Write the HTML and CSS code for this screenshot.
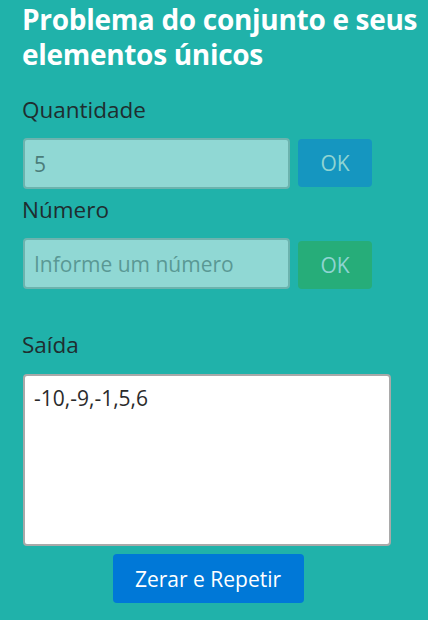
FILE: index.html
```html
<!DOCTYPE html>
<html lang="pt-BR">
<head>
<meta charset="utf-8">
<title>Conjunto</title>
<link rel="stylesheet" href="styles.css">
</head>
<body>
<main class="page">
  <h1 class="title">Problema do conjunto e seus elementos únicos</h1>
  <label class="label label-first" for="qtd">Quantidade</label>
  <div class="row row-one">
    <input class="field" id="qtd" type="text" value="5" disabled>
    <button class="btn btn-ok btn-blue" disabled>OK</button>
  </div>
  <label class="label label-num" for="num">Número</label>
  <div class="row row-two">
    <input class="field" id="num" type="text" placeholder="Informe um número" disabled>
    <button class="btn btn-ok btn-green" disabled>OK</button>
  </div>
  <label class="label label-out" for="out">Saída</label>
  <textarea class="output" id="out" readonly>-10,-9,-1,5,6</textarea>
  <div class="actions">
    <button class="btn btn-reset">Zerar e Repetir</button>
  </div>
</main>
</body>
</html>
```
FILE: styles.css
```css
html, body {
  margin: 0;
  padding: 0;
  background: #20b2aa;
}
body {
  font-family: "Open Sans", "Noto Sans", sans-serif;
  color: #212529;
  overflow: hidden;
}
.page {
  padding: 2px 2px 0 22px;
}
.title {
  margin: 0;
  font-size: 28px;
  line-height: 35px;
  font-weight: 700;
  color: #ffffff;
  letter-spacing: -0.3px;
}
.label {
  display: block;
  font-size: 22.5px;
  line-height: 27px;
  color: #1f2d2f;
}
.label-first { margin-top: 24px; }
.label-num { margin-top: 7px; }
.label-out { margin-top: 42px; }
.row {
  display: flex;
  gap: 8px;
  margin-top: 15px;
  width: 351px;
}
.row-one { align-items: flex-start; }
.row-one .btn-ok { margin-top: 1px; height: 48px; }
.row-two { align-items: flex-end; }
.field {
  box-sizing: border-box;
  width: 267px;
  height: 51px;
  margin: 0 0 0 1px;
  padding: 0 9px;
  border: 2px solid #6cb3ae;
  border-radius: 4px;
  background: #90d8d4;
  font-family: inherit;
  font-size: 21px;
  color: #4b7d7a;
}
.field::placeholder {
  color: #5a9894;
  opacity: 1;
}
.btn {
  border: none;
  border-radius: 4px;
  font-family: inherit;
  cursor: pointer;
}
.btn-ok {
  width: 74px;
  height: 48px;
  font-size: 21px;
  color: #8fd4d2;
}
.btn-blue { background: #1596c0; }
.btn-green { background: #26ad79; }
.output {
  box-sizing: border-box;
  display: block;
  width: 368px;
  height: 172px;
  margin: 16px 0 0 1px;
  padding: 9px 9px;
  border: 2px solid #a9a9a9;
  border-radius: 4px;
  background: #ffffff;
  font-family: inherit;
  font-size: 21px;
  line-height: 26px;
  color: #2b2b2b;
  resize: none;
}
.actions {
  width: 368px;
  display: flex;
  justify-content: center;
  margin-top: 8px;
}
.btn-reset {
  width: 191px;
  height: 49px;
  margin-left: 4px;
  background: #0078d7;
  color: #ffffff;
  font-size: 21px;
}
```
